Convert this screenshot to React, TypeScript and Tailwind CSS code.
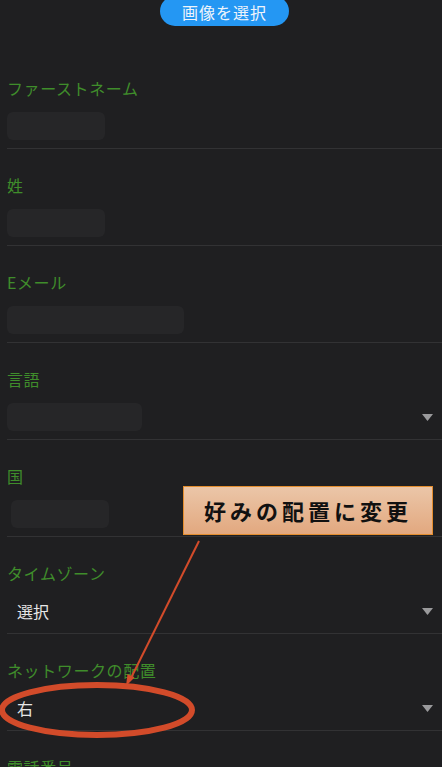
import React from "react";

const font = { fontFamily: '"Noto Sans CJK JP", "Noto Sans", sans-serif' };

function Caret() {
  return (
    <svg width="11" height="7" viewBox="0 0 11 7" className="mr-[9px]">
      <path d="M0 0 L11 0 L5.5 7 Z" fill="#9a9a9c" />
    </svg>
  );
}

function Row({
  label,
  children,
  last,
}: {
  label: string;
  children: React.ReactNode;
  last?: boolean;
}) {
  return (
    <div className={last ? "" : "border-b border-[#323234]"}>
      <div className="pt-[26px] pb-[8px]">
        <div className="h-[20px] leading-[20px] text-[16px] tracking-[0.6px] text-[#3f8d2b]">{label}</div>
        <div className="mt-[14px] h-[28px] flex items-center justify-between">{children}</div>
      </div>
    </div>
  );
}

export default function App() {
  return (
    <div className="relative w-[442px] h-[767px] overflow-hidden bg-[#1f1f21]" style={font}>
      <div className="pl-[7px]">
        <div className="flex justify-center">
          <div className="mt-[-4px] h-[30px] w-[129px] rounded-full bg-[#2497f3] flex items-center justify-center pt-[2px] text-[16px] text-[#eef4fb] tracking-[1px]">
            画像を選択
          </div>
        </div>
        <div className="pt-[26px]">
          <Row label="ファーストネーム">
            <div className="w-[98px] h-[28px] rounded-[6px] bg-[#262628]" />
          </Row>
          <Row label="姓">
            <div className="w-[98px] h-[28px] rounded-[6px] bg-[#262628]" />
          </Row>
          <Row label="Eメール">
            <div className="w-[177px] h-[28px] rounded-[6px] bg-[#262628]" />
          </Row>
          <Row label="言語">
            <div className="w-[135px] h-[28px] rounded-[6px] bg-[#262628]" />
            <Caret />
          </Row>
          <Row label="国">
            <div className="ml-[4px] w-[98px] h-[28px] rounded-[6px] bg-[#262628]" />
          </Row>
          <Row label="タイムゾーン">
            <span className="pl-[10px] text-[16px] text-[#e6e6e6]">選択</span>
            <Caret />
          </Row>
          <Row label="ネットワークの配置">
            <span className="pl-[10px] text-[16px] text-[#e6e6e6]">右</span>
            <Caret />
          </Row>
          <Row label="電話番号" last>
            <span />
          </Row>
        </div>
      </div>

      <div className="absolute left-[183px] top-[486px] w-[250px] h-[49px] border border-[#e38d2e] bg-gradient-to-b from-[#ebc6a8] to-[#e2a87f] flex items-center justify-center text-[22px] font-bold text-[#111] tracking-[4px]">
        好みの配置に変更
      </div>

      <svg className="absolute left-0 top-0 pointer-events-none" width="442" height="767">
        <line x1="199" y1="541" x2="131" y2="678" stroke="#d24b2a" strokeWidth="2" />
        <path d="M126 686 L127.5 674 L134.5 677.5 Z" fill="#d24b2a" />
        <ellipse cx="97" cy="710" rx="95" ry="25" fill="none" stroke="#d24b2a" strokeWidth="6" />
      </svg>
    </div>
  );
}
